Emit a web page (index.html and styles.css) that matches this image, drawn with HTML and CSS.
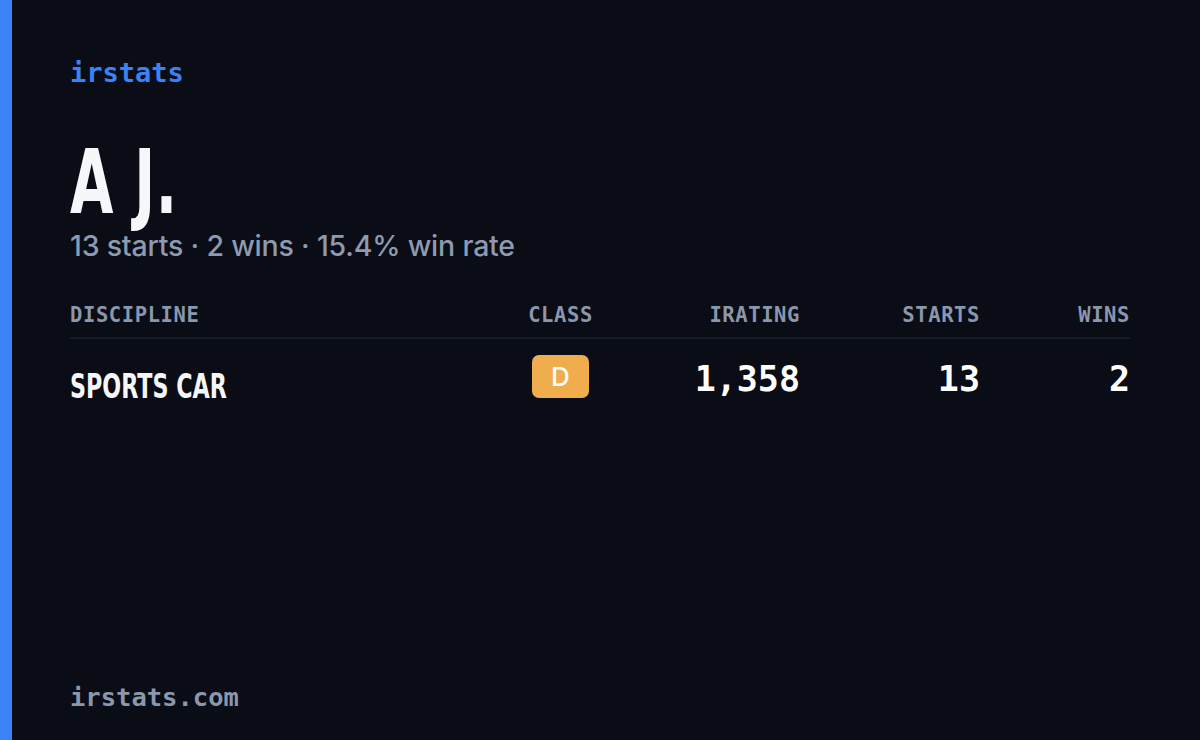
FILE: index.html
```html
<!DOCTYPE html>
<html lang="en">
<head>
<meta charset="utf-8">
<title>irstats</title>
<link rel="stylesheet" href="styles.css">
</head>
<body>
<div class="card">
  <div class="accent"></div>
  <main class="content">
    <div class="logo">irstats</div>
    <h1 class="name"><span class="squeeze">A J.</span></h1>
    <p class="summary">13 starts · 2 wins · 15.4% win rate</p>
    <div class="table">
      <div class="row head">
        <div class="cell disc">DISCIPLINE</div>
        <div class="cell cls">CLASS</div>
        <div class="cell num">IRATING</div>
        <div class="cell num">STARTS</div>
        <div class="cell num">WINS</div>
      </div>
      <div class="row body">
        <div class="cell disc"><span class="squeeze wide">SPORTS CAR</span></div>
        <div class="cell cls"><span class="badge">D</span></div>
        <div class="cell num">1,358</div>
        <div class="cell num">13</div>
        <div class="cell num">2</div>
      </div>
    </div>
    <footer class="footer">irstats.com</footer>
  </main>
</div>
</body>
</html>
```
FILE: styles.css
```css
html, body {
  margin: 0;
  padding: 0;
  background: #0a0d15;
}
.card {
  display: flex;
  width: 1200px;
  height: 740px;
  background: #0a0d15;
  overflow: hidden;
}
.accent {
  width: 12px;
  flex: none;
  background: #3b82f6;
}
.content {
  flex: 1;
  display: flex;
  flex-direction: column;
  padding: 0 70px 0 58px;
}
.logo {
  font-family: "DejaVu Sans Mono", monospace;
  font-size: 27px;
  font-weight: bold;
  color: #3b82f6;
  margin-top: 55px;
  line-height: 36px;
}
.name {
  margin: 51px 0 0;
  font-family: "DejaVu Sans Condensed", "DejaVu Sans", sans-serif;
  font-weight: bold;
  font-size: 89px;
  line-height: 80px;
  color: #f6f7fb;
  letter-spacing: 1px;
}
.squeeze {
  display: inline-block;
  transform: scaleX(0.7);
  transform-origin: left center;
  white-space: nowrap;
}
.squeeze.wide {
  transform: scaleX(0.727);
}
.summary {
  margin: 6px 0 0;
  font-family: Inter, "Noto Sans", sans-serif;
  font-weight: 500;
  font-size: 28.5px;
  line-height: 36px;
  color: #8e9ab0;
  letter-spacing: -0.2px;
}
.table {
  margin-top: 36px;
}
.row {
  display: grid;
  grid-template-columns: 1fr 65px 207px 180px 150px;
  align-items: center;
}
.row.head {
  font-family: "DejaVu Sans Mono", monospace;
  font-weight: bold;
  font-size: 20.5px;
  letter-spacing: 0.6px;
  color: #8b97ad;
  line-height: 30px;
  padding-bottom: 7px;
  border-bottom: 2px solid #171b26;
}
.row.body {
  padding-top: 12px;
  font-family: "DejaVu Sans Mono", monospace;
  font-weight: bold;
  font-size: 35px;
  color: #ffffff;
}
.cell.num { text-align: right; }
.cell.cls { text-align: center; }
.row.body .disc {
  font-family: "DejaVu Sans Condensed", "DejaVu Sans", sans-serif;
  font-weight: bold;
  font-size: 34px;
  color: #f6f7fb;
  padding-top: 15px;
}
.badge {
  display: inline-flex;
  align-items: center;
  justify-content: center;
  width: 57px;
  height: 43px;
  margin-bottom: 4px;
  border-radius: 7px;
  background: #f0ad4e;
  color: #ffffff;
  font-family: Inter, "Noto Sans", sans-serif;
  font-weight: 500;
  font-size: 26px;
  vertical-align: top;
}
.footer {
  margin-top: auto;
  margin-bottom: 26px;
  font-family: "DejaVu Sans Mono", monospace;
  font-weight: bold;
  font-size: 25.5px;
  line-height: 34px;
  color: #8b97ad;
}
```
